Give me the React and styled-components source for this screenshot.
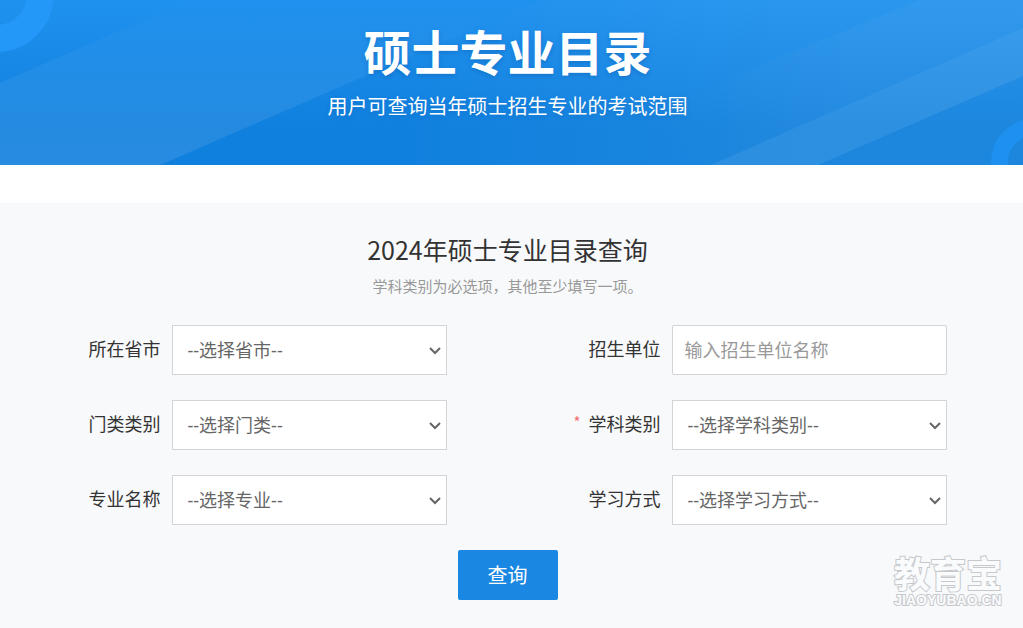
import React from "react";
import styled, { createGlobalStyle } from "styled-components";

const GlobalStyle = createGlobalStyle`
  *, *::before, *::after { box-sizing: border-box; }
  body {
    margin: 0;
    background: #fff;
    color: #333;
    font-family: "Noto Sans CJK SC", sans-serif;
  }
  h1, h2, p { margin: 0; font-weight: 400; }
  button, input, select { font-family: inherit; }
`;

const Page = styled.div`
  min-height: 100vh;
  display: flex;
  flex-direction: column;
`;

const Banner = styled.header`
  position: relative;
  height: 165px;
  padding: 20px 8px 0 0;
  overflow: hidden;
  color: #fff;
  text-align: center;
  background: linear-gradient(#1f91ef, #1080de 78%);
`;

const BannerArt = styled.svg`
  position: absolute;
  inset: 0;
  width: 100%;
  height: 100%;
`;

const BannerTitle = styled.h1`
  position: relative;
  font-size: 48px;
  line-height: 60px;
  font-weight: 700;
  text-shadow: 0 2px 4px rgba(0, 60, 130, 0.25);
`;

const BannerText = styled.p`
  position: relative;
  margin-top: 11px;
  font-size: 20px;
  line-height: 30px;
  text-shadow: 0 2px 4px rgba(0, 60, 130, 0.2);
`;

const Panel = styled.main`
  position: relative;
  flex: 1;
  margin-top: 38px;
  padding: 27px 8px 28px 0;
  background: #f8f9fb;
  text-align: center;
`;

const PanelTitle = styled.h2`
  font-size: 25px;
  line-height: 38px;
`;

const PanelHint = styled.p`
  margin-top: 5px;
  color: #999;
  font-size: 15px;
  line-height: 26px;
`;

const Form = styled.form`
  max-width: 1000px;
  margin: 26px auto 0;
  display: grid;
  grid-template-columns: 1fr 1fr;
  row-gap: 25px;
`;

const Field = styled.div`
  display: grid;
  grid-template-columns: 153px 275px;
  column-gap: 11px;
`;

const Label = styled.label`
  display: flex;
  justify-content: flex-end;
  gap: 8px;
  height: 50px;
  font-size: 18px;
  line-height: 46px;
  white-space: nowrap;
`;

const Required = styled.span`
  color: #f56c6c;
  font-size: 15px;
  line-height: 44px;
`;

const SelectBox = styled.div`
  display: grid;
  align-items: center;
  & > * { grid-area: 1 / 1; }
`;

const Select = styled.select`
  appearance: none;
  width: 100%;
  height: 50px;
  padding: 0 36px 0 15px;
  border: 1px solid #d2d4d7;
  border-radius: 0;
  background: #fff;
  color: #666;
  font-family: "Noto Sans", "Noto Sans CJK SC", sans-serif;
  font-size: 18px;
`;

const Chevron = styled.svg`
  justify-self: end;
  margin-right: 5px;
  width: 14px;
  height: 14px;
  pointer-events: none;
`;

const Input = styled.input`
  height: 50px;
  padding: 0 12px 2px;
  border: 1px solid #d2d4d7;
  border-radius: 2px;
  background: #fff;
  color: #666;
  font-size: 18px;
  &::placeholder { color: #999; opacity: 1; }
`;

const Submit = styled.button`
  grid-column: 1 / -1;
  justify-self: center;
  width: 100px;
  height: 50px;
  padding: 0 0 2px;
  border: 0;
  border-radius: 2px;
  background: #1a87e2;
  color: #fff;
  font-size: 20px;
  cursor: pointer;
`;

const Watermark = styled.div`
  position: absolute;
  right: 21px;
  bottom: 20px;
  display: grid;
  row-gap: 2px;
  color: #fafbfd;
  font-weight: 700;
  text-align: center;
  -webkit-text-stroke: 2px #c6c8cb;
  paint-order: stroke fill;
  pointer-events: none;
`;

const WatermarkName = styled.div`
  font-size: 36px;
  line-height: 36px;
`;

const WatermarkSite = styled.div`
  font-family: "Liberation Sans", Arial, sans-serif;
  font-size: 14px;
  line-height: 16px;
`;

const fields = [
  { id: "province", label: "所在省市", option: "--选择省市--" },
  { id: "school", label: "招生单位", placeholder: "输入招生单位名称" },
  { id: "category", label: "门类类别", option: "--选择门类--" },
  { id: "subject", label: "学科类别", option: "--选择学科类别--", required: true },
  { id: "major", label: "专业名称", option: "--选择专业--" },
  { id: "mode", label: "学习方式", option: "--选择学习方式--" },
];

function BannerBackground() {
  return (
    <BannerArt viewBox="0 0 1023 165" preserveAspectRatio="none" aria-hidden="true">
      <defs>
        <linearGradient id="leftBand" gradientUnits="userSpaceOnUse" x1="0" y1="165" x2="0" y2="0">
          <stop offset="0" stopColor="#fff" stopOpacity="0.1" />
          <stop offset="0.5" stopColor="#fff" stopOpacity="0.06" />
          <stop offset="1" stopColor="#fff" stopOpacity="0" />
        </linearGradient>
        <linearGradient id="rightGlow" gradientUnits="userSpaceOnUse" x1="400" y1="0" x2="800" y2="0">
          <stop offset="0" stopColor="#e4efdc" stopOpacity="0" />
          <stop offset="1" stopColor="#e4efdc" stopOpacity="0.06" />
        </linearGradient>
        <linearGradient id="rightBand" gradientUnits="userSpaceOnUse" x1="620" y1="100" x2="860" y2="0">
          <stop offset="0" stopColor="#fff" stopOpacity="0" />
          <stop offset="1" stopColor="#fff" stopOpacity="0.03" />
        </linearGradient>
      </defs>
      <path d="M0 83 190 0H540L160 165H0Z" fill="url(#leftBand)" />
      <path d="M540 0H1023V165H160Z" fill="url(#rightGlow)" />
      <path d="M516 165 920 0H1023V28L711 165Z" fill="url(#rightBand)" />
      <path d="M711 165 1023 28V76L818 165Z" fill="#fff" fillOpacity="0.08" />
      <circle cx="-4" cy="-6" r="44.5" fill="none" stroke="#2498f8" strokeWidth="27" />
      <circle cx="1034" cy="162" r="34.5" fill="none" stroke="#1e90f0" strokeWidth="17" />
    </BannerArt>
  );
}

export default function App() {
  return (
    <Page lang="zh-CN">
      <GlobalStyle />
      <Banner>
        <BannerBackground />
        <BannerTitle>硕士专业目录</BannerTitle>
        <BannerText>用户可查询当年硕士招生专业的考试范围</BannerText>
      </Banner>
      <Panel>
        <PanelTitle>2024年硕士专业目录查询</PanelTitle>
        <PanelHint>学科类别为必选项，其他至少填写一项。</PanelHint>
        <Form onSubmit={(e) => e.preventDefault()}>
          {fields.map((f) => (
            <Field key={f.id}>
              <Label htmlFor={f.id}>
                {f.required && <Required>*</Required>}
                {f.label}
              </Label>
              {f.option ? (
                <SelectBox>
                  <Select id={f.id} defaultValue="">
                    <option value="">{f.option}</option>
                  </Select>
                  <Chevron viewBox="0 0 14 14" aria-hidden="true">
                    <path d="M2 5 7 10 12 5" fill="none" stroke="#666" strokeWidth="2" />
                  </Chevron>
                </SelectBox>
              ) : (
                <Input id={f.id} type="text" placeholder={f.placeholder} />
              )}
            </Field>
          ))}
          <Submit type="submit">查询</Submit>
        </Form>
        <Watermark>
          <WatermarkName>教育宝</WatermarkName>
          <WatermarkSite>JIAOYUBAO.CN</WatermarkSite>
        </Watermark>
      </Panel>
    </Page>
  );
}
